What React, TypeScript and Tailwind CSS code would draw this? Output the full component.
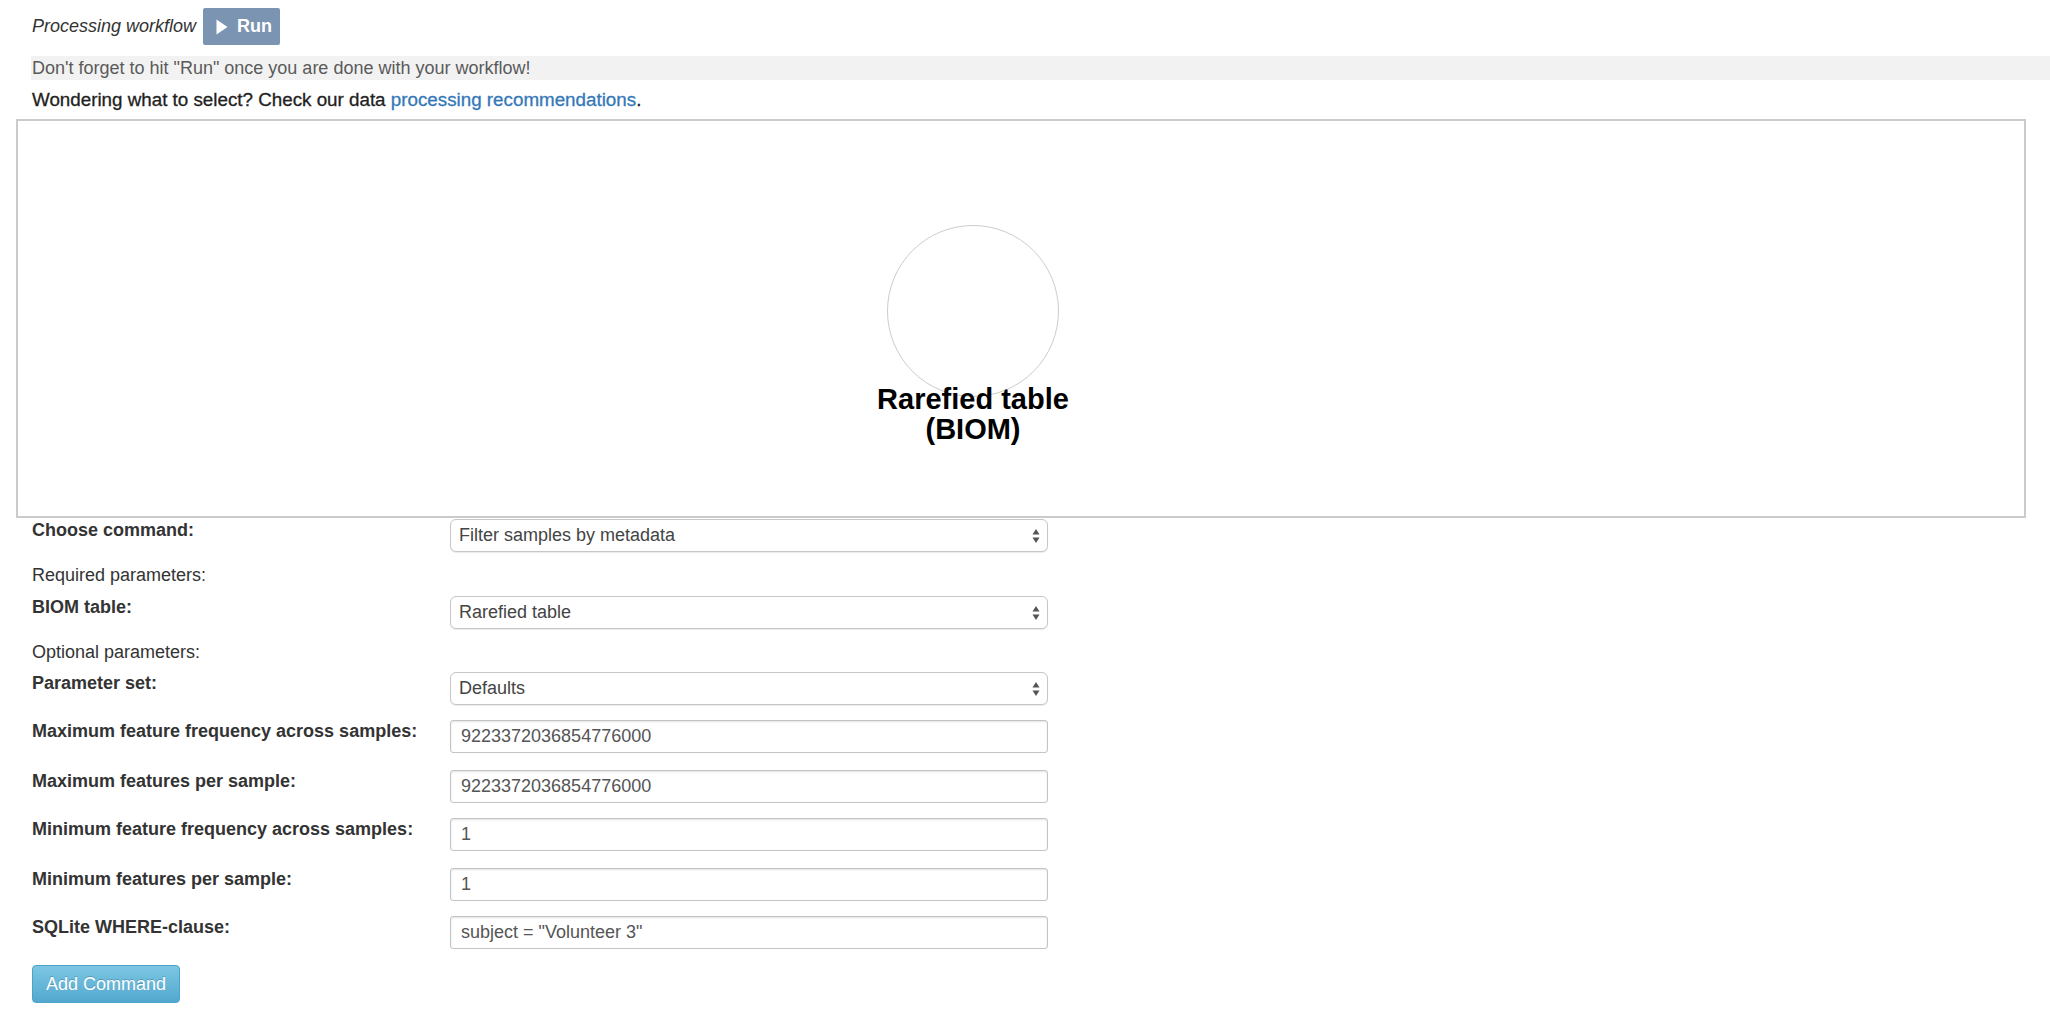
import React from "react";

type Row = { label: string; value: string; kind: "select" | "input" };

const optionalRows: Row[] = [
  { label: "Maximum feature frequency across samples:", value: "9223372036854776000", kind: "input" },
  { label: "Maximum features per sample:", value: "9223372036854776000", kind: "input" },
  { label: "Minimum feature frequency across samples:", value: "1", kind: "input" },
  { label: "Minimum features per sample:", value: "1", kind: "input" },
  { label: "SQLite WHERE-clause:", value: 'subject = "Volunteer 3"', kind: "input" },
];

function SelectBox({ value }: { value: string }) {
  return (
    <div className="relative flex h-[33px] w-[598px] items-center rounded-[6px] border border-[#c6c6c6] bg-white pl-[8px] text-[18px] text-[#444] shadow-[0_1px_1px_rgba(0,0,0,0.08)]">
      <span>{value}</span>
      <svg className="absolute right-[7px] top-[8px]" width="8" height="16" viewBox="0 0 8 16" aria-hidden="true">
        <path d="M4 1 L7.5 6.5 L0.5 6.5 Z" fill="#555" />
        <path d="M4 15 L7.5 9.5 L0.5 9.5 Z" fill="#555" />
      </svg>
    </div>
  );
}

function InputBox({ value }: { value: string }) {
  return (
    <div className="flex h-[33px] w-[598px] items-center rounded-[3px] border border-[#c4c4c4] bg-white pl-[10px] text-[18px] text-[#555] shadow-[inset_0_1px_2px_rgba(0,0,0,0.12)]">
      {value}
    </div>
  );
}

function FormRow({ row, className }: { row: Row; className: string }) {
  return (
    <div className={`flex items-start ${className}`}>
      <label className="w-[418px] shrink-0 text-[18px] font-bold leading-[22px] text-[#333]">{row.label}</label>
      {row.kind === "select" ? <SelectBox value={row.value} /> : <InputBox value={row.value} />}
    </div>
  );
}

export default function App() {
  return (
    <div className="min-h-[1016px] w-[2050px] bg-white font-['Liberation_Sans',Arial,sans-serif] text-[#333]">
      {/* cabecera */}
      <div className="flex items-center gap-[7px] pl-[32px] pt-[8px]">
        <span className="text-[18px] italic text-[#333]">Processing workflow</span>
        <button className="flex h-[37px] items-center gap-[9px] rounded-[2px] bg-[#7b94b1] pl-[13px] pr-[8px] text-[18px] font-bold text-white">
          <svg width="12" height="16" viewBox="0 0 12 16" aria-hidden="true">
            <path d="M0.5 0.5 L11.5 8 L0.5 15.5 Z" fill="#fff" />
          </svg>
          Run
        </button>
      </div>
      <div className="ml-[31px] mt-[11px] h-[24px] bg-[#f2f2f2] pl-[1px] text-[18px] leading-[24px] text-[#5a5a5a]">
        Don't forget to hit "Run" once you are done with your workflow!
      </div>
      <div className="mt-[8px] pl-[32px] text-[18.8px] leading-[24px] text-[#222] [-webkit-text-stroke:0.3px_currentColor]">
        Wondering what to select? Check our data{" "}
        <a href="#" className="text-[#3478b8]">
          processing recommendations
        </a>
        .
      </div>

      {/* lienzo del grafo */}
      <div className="relative ml-[16px] mt-[7px] h-[399px] w-[2010px] border-2 border-[#cbcbcb]">
        <div className="absolute left-[869px] top-[104px] h-[172px] w-[172px] rounded-full border-[1.5px] border-[#cccccc]" />
        <div className="absolute left-[955px] top-[263px] -translate-x-1/2 whitespace-nowrap text-center text-[29px] font-bold leading-[30px] text-black">
          Rarefied table
          <br />
          (BIOM)
        </div>
      </div>

      {/* formulario */}
      <div className="pl-[32px]">
        <FormRow row={{ label: "Choose command:", value: "Filter samples by metadata", kind: "select" }} className="mt-[1px]" />
        <div className="mt-[12px] text-[18px] leading-[22px] text-[#333]">Required parameters:</div>
        <FormRow row={{ label: "BIOM table:", value: "Rarefied table", kind: "select" }} className="mt-[10px]" />
        <div className="mt-[12px] text-[18px] leading-[22px] text-[#333]">Optional parameters:</div>
        <FormRow row={{ label: "Parameter set:", value: "Defaults", kind: "select" }} className="mt-[9px]" />
        {optionalRows.map((row, i) => (
          <FormRow key={i} row={row} className={i % 2 === 0 ? "mt-[15px]" : "mt-[17px]"} />
        ))}
        <button className="mt-[16px] h-[38px] w-[148px] rounded-[4px] border border-[#4aa3c9] bg-linear-to-b from-[#7cc6e3] to-[#52a8cf] text-[18px] text-white [text-shadow:0_-1px_0_rgba(0,0,0,0.2)]">
          Add Command
        </button>
      </div>
    </div>
  );
}
